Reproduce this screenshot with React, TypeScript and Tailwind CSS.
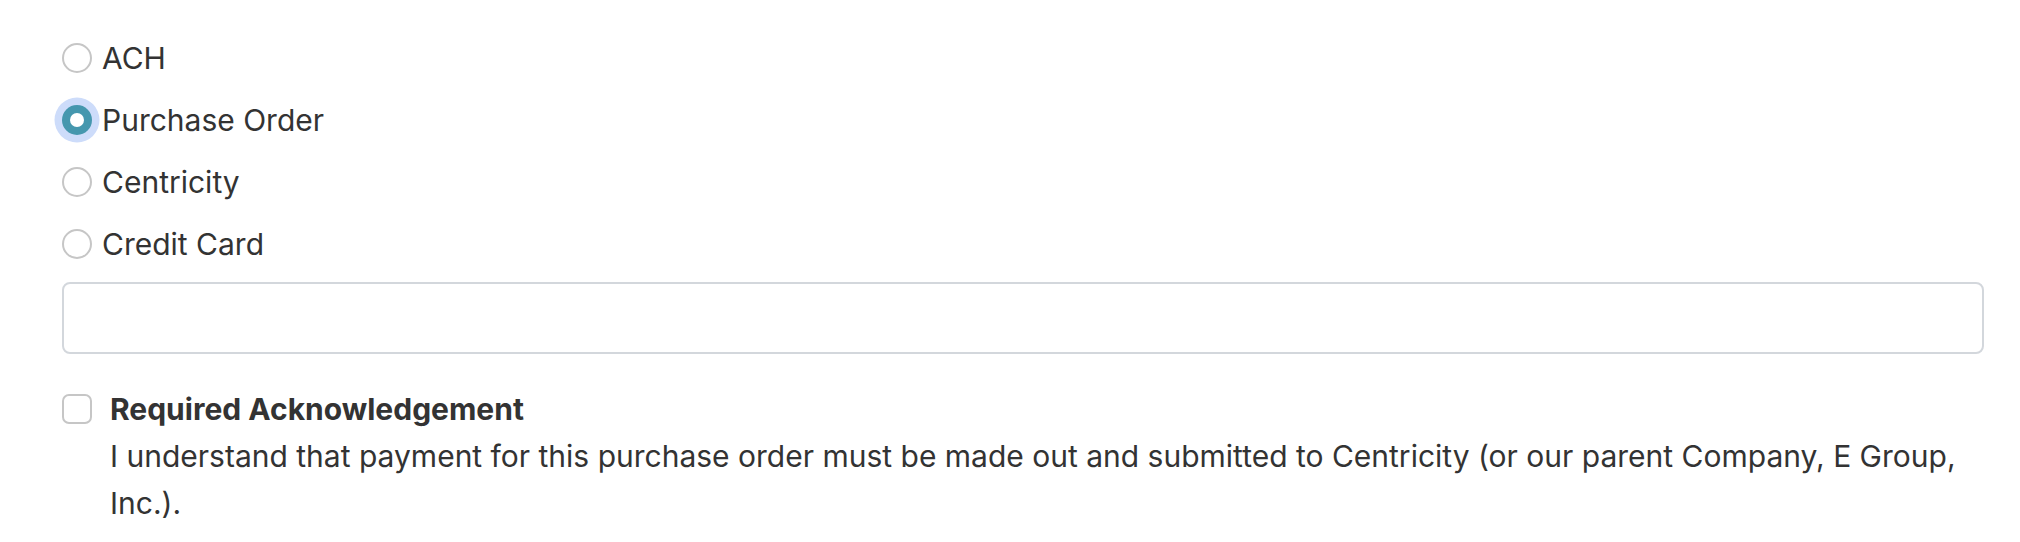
const options = [
  { label: "ACH", checked: false },
  { label: "Purchase Order", checked: true },
  { label: "Centricity", checked: false },
  { label: "Credit Card", checked: false },
];

function Radio({ checked }: { checked: boolean }) {
  if (checked) {
    return (
      <span className="flex h-[30px] w-[30px] shrink-0 items-center justify-center rounded-full bg-[#4597ae] shadow-[0_0_0_7.5px_#cddcfa]">
        <span className="h-[14px] w-[14px] rounded-full bg-white" />
      </span>
    );
  }
  return <span className="h-[30px] w-[30px] shrink-0 rounded-full border-2 border-[#c6c6c6] bg-white" />;
}

export default function App() {
  return (
    <div className="min-h-[542px] bg-white pl-[62px] pr-[36px] pt-[27px] text-[30px] text-[#333333] [font-family:Inter,'Liberation_Sans',Arial,sans-serif]">
      <div className="flex flex-col">
        {options.map((o) => (
          <label key={o.label} className="flex h-[62px] items-center gap-[10px] leading-[45px]">
            <Radio checked={o.checked} />
            <span>{o.label}</span>
          </label>
        ))}
      </div>

      <input className="mt-[7px] block h-[72px] w-full rounded-[8px] border-2 border-[#d3d7dc] bg-white px-4 outline-none" />

      <div className="mt-[32px] flex items-start leading-[47px]">
        <span className="mt-[8px] h-[30px] w-[30px] shrink-0 rounded-[7px] border-2 border-[#c6c6c6] bg-white" />
        <div className="ml-[18px]">
          <div className="font-bold">Required Acknowledgement</div>
          <div>
            I understand that payment for this purchase order must be made out and submitted to Centricity (or our parent
            Company, E Group, Inc.).
          </div>
        </div>
      </div>
    </div>
  );
}
